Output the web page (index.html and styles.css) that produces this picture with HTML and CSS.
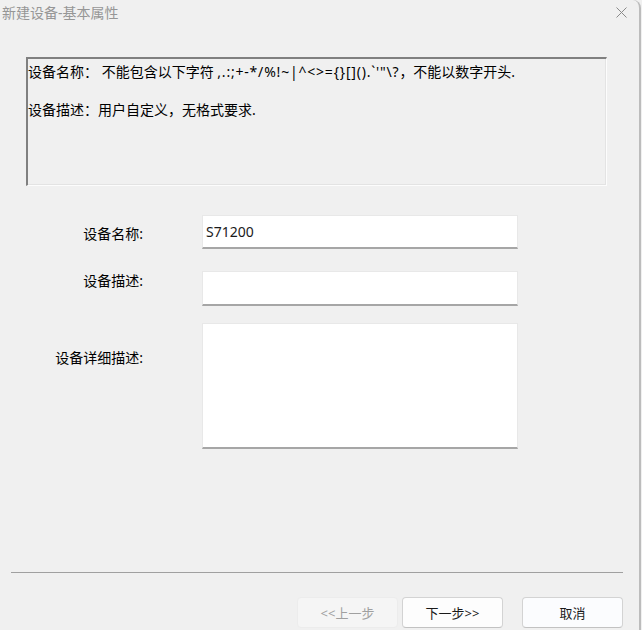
FILE: index.html
```html
<!DOCTYPE html>
<html lang="zh-CN">
<head>
<meta charset="utf-8">
<title>新建设备-基本属性</title>
<link rel="stylesheet" href="styles.css">
</head>
<body>
<div class="window">
  <div class="titlebar">
    <span class="title">新建设备-基本属性</span>
    <svg class="close" width="11" height="11" viewBox="0 0 11 11"><path d="M0.5 0.5 L10.5 10.5 M10.5 0.5 L0.5 10.5" stroke="#8a8a8a" stroke-width="1" fill="none"/></svg>
  </div>
  <div class="info">
    <p class="info-line">设备名称： 不能包含以下字符 <span class="chars">,.:;+-*/%!~|^&lt;&gt;={}[]().`'"\?</span>，不能以数字开头.</p>
    <p class="info-line">设备描述：用户自定义，无格式要求.</p>
  </div>
  <div class="form">
    <label class="label label-name">设备名称:</label>
    <input class="field field-name" type="text" value="S71200">
    <label class="label label-desc">设备描述:</label>
    <input class="field field-desc" type="text" value="">
    <label class="label label-detail">设备详细描述:</label>
    <textarea class="field field-area"></textarea>
  </div>
  <div class="footer">
    <div class="separator"></div>
    <div class="buttons">
      <button class="btn btn-disabled" disabled>&lt;&lt;上一步</button>
      <button class="btn btn-next">下一步&gt;&gt;</button>
      <button class="btn btn-cancel">取消</button>
    </div>
  </div>
</div>
</body>
</html>
```
FILE: styles.css
```css
html, body {
  margin: 0;
  padding: 0;
  background: #f0f0f0;
}
body {
  font-family: "Noto Sans", "Noto Sans CJK SC", sans-serif;
  font-size: 14px;
  color: #000;
}
.window {
  width: 641px;
  height: 630px;
  box-sizing: border-box;
  border-right: 2px solid #bcbcbc;
  border-top-right-radius: 8px;
  display: flex;
  flex-direction: column;
  background: #f0f0f0;
}
.titlebar {
  height: 30px;
  display: flex;
  justify-content: space-between;
  align-items: flex-start;
  flex-shrink: 0;
}
.title {
  font-size: 14px;
  line-height: 20px;
  padding-top: 3px;
  padding-left: 2px;
  color: #969696;
}
.close {
  margin-top: 7px;
  margin-right: 12px;
}
.info {
  margin-top: 27px;
  margin-left: 26px;
  width: 581px;
  height: 129px;
  box-sizing: border-box;
  border-top: 2px solid #808080;
  border-left: 2px solid #808080;
  border-right: 1px solid #fcfcfc;
  border-bottom: 1px solid #fcfcfc;
  box-shadow: inset -1px -1px 0 #e3e3e3;
  padding-top: 3px;
  flex-shrink: 0;
}
.info-line {
  margin: 0 0 19px;
  line-height: 19px;
  white-space: nowrap;
}
.chars {
  letter-spacing: 0.8px;
}
.form {
  margin-top: 29px;
  display: grid;
  grid-template-columns: 143px 316px;
  column-gap: 59px;
  align-items: start;
}
.label {
  text-align: right;
  line-height: 19px;
  white-space: nowrap;
}
.label-name { margin-top: 9px; }
.label-desc { margin-top: 22px; }
.label-detail { margin-top: 42px; }
.field {
  box-sizing: border-box;
  width: 316px;
  height: 34px;
  margin: 0;
  padding: 2px 3px;
  border: 1px solid #e8e8e8;
  border-bottom: 2px solid #a6a6a6;
  background: #fff;
  font-family: "Noto Sans", "Noto Sans CJK SC", sans-serif;
  font-size: 14px;
  line-height: 19px;
  color: #1a1a1a;
  outline: none;
}
.field-desc {
  height: 35px;
  margin-top: 22px;
}
.field-area {
  height: 126px;
  margin-top: 17px;
  resize: none;
  display: block;
}
.footer {
  margin-top: auto;
  flex-shrink: 0;
}
.separator {
  margin-left: 11px;
  width: 612px;
  height: 1px;
  background: #a0a0a0;
}
.buttons {
  margin-top: 24px;
  padding-right: 16px;
  padding-bottom: 2px;
  display: flex;
  justify-content: flex-end;
}
.btn {
  width: 101px;
  height: 31px;
  box-sizing: border-box;
  border-radius: 4px;
  font-family: "Noto Sans", "Noto Sans CJK SC", sans-serif;
  font-size: 13px;
  padding: 0;
  margin: 0;
}
.btn-disabled {
  background: #f5f5f5;
  border: 1px solid #ececec;
  color: #a0a0a0;
}
.btn-next {
  margin-left: 4px;
  background: #fdfdfd;
  border: 1px solid #d3d3d3;
  border-bottom-color: #c2c2c2;
  color: #1a1a1a;
}
.btn-cancel {
  margin-left: 19px;
  background: #fbfcfe;
  border: 1px solid #d3d3d3;
  border-bottom-color: #c2c2c2;
  color: #1a1a1a;
}
```
